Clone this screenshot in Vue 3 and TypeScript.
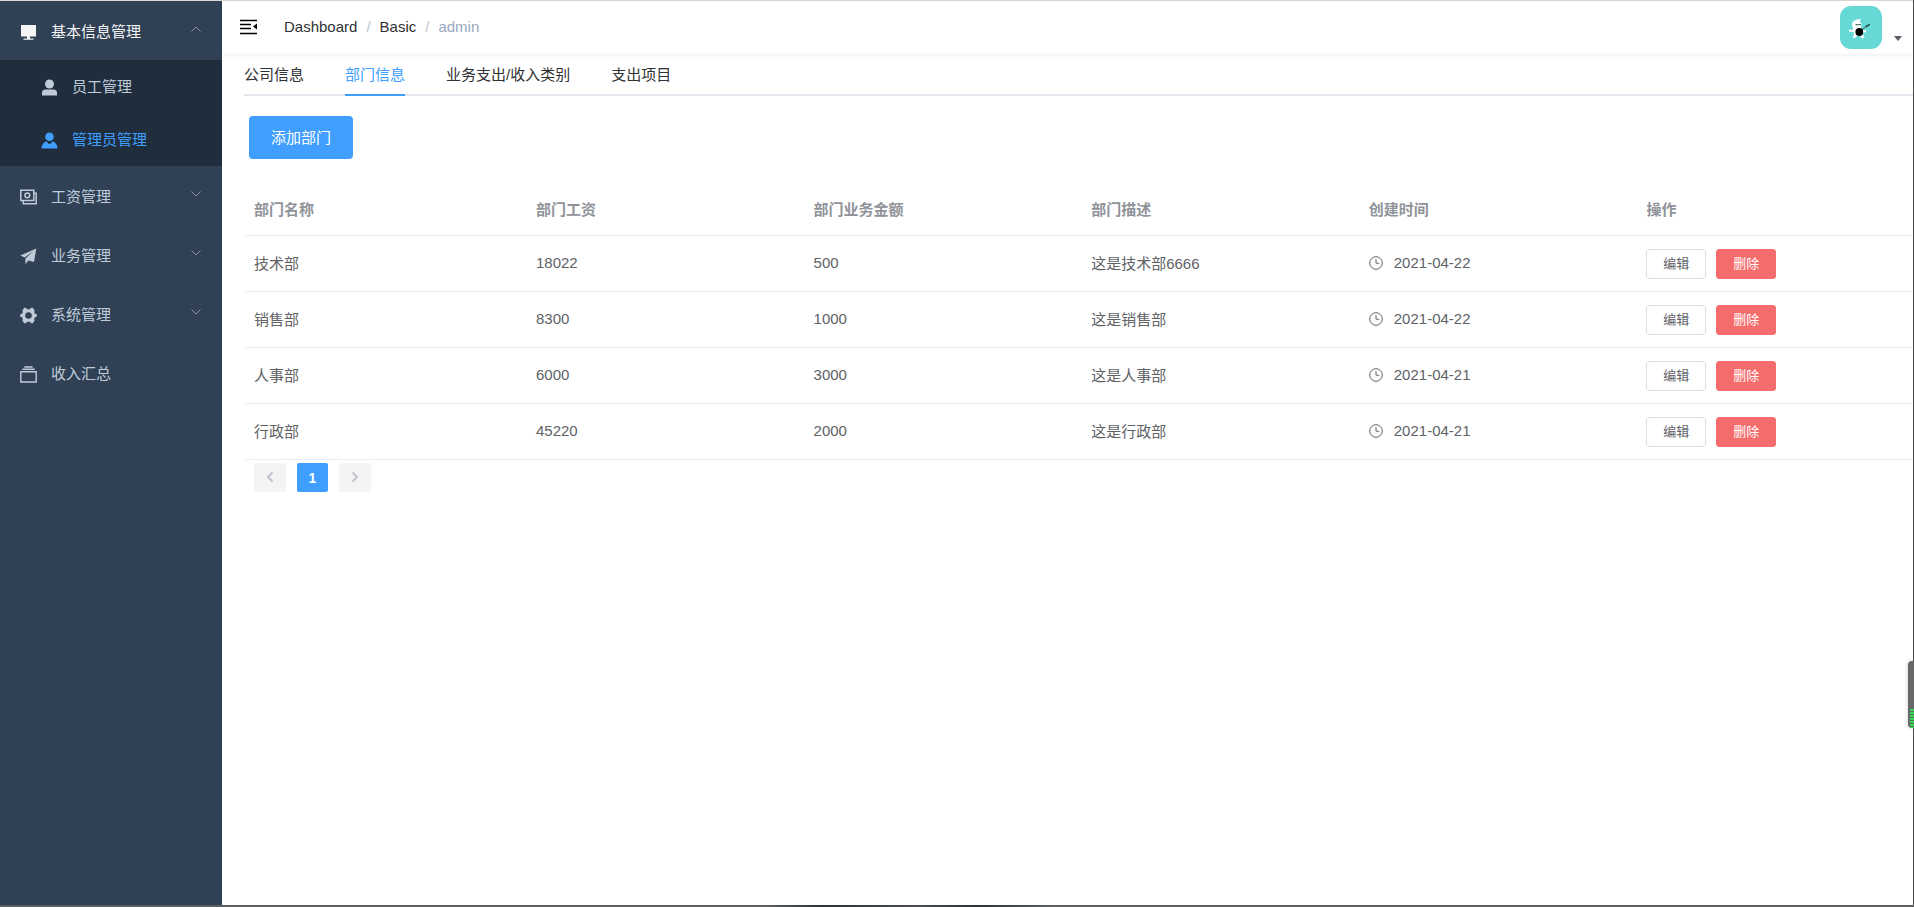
<script setup lang="ts">
import { ref } from 'vue'

interface Department {
  name: string
  salary: number
  amount: number
  description: string
  created: string
}

interface MenuEntry {
  title: string
  icon: 'money' | 'plane' | 'gear' | 'wallet'
  expandable: boolean
}

const menu: MenuEntry[] = [
  { title: '工资管理', icon: 'money', expandable: true },
  { title: '业务管理', icon: 'plane', expandable: true },
  { title: '系统管理', icon: 'gear', expandable: true },
  { title: '收入汇总', icon: 'wallet', expandable: false },
]

const tabs: string[] = ['公司信息', '部门信息', '业务支出/收入类别', '支出项目']
const activeTab = ref('部门信息')

const columns: string[] = ['部门名称', '部门工资', '部门业务金额', '部门描述', '创建时间', '操作']
const departments: Department[] = [
  { name: '技术部', salary: 18022, amount: 500, description: '这是技术部6666', created: '2021-04-22' },
  { name: '销售部', salary: 8300, amount: 1000, description: '这是销售部', created: '2021-04-22' },
  { name: '人事部', salary: 6000, amount: 3000, description: '这是人事部', created: '2021-04-21' },
  { name: '行政部', salary: 45220, amount: 2000, description: '这是行政部', created: '2021-04-21' },
]
</script>

<template>
  <div class="app">
    <nav class="sidebar" aria-label="主菜单">
      <button type="button" class="item open" aria-expanded="true">
        <svg class="icon" viewBox="0 0 17 17" fill="currentColor"><path d="M1 1h15v11.500H1zM7 12.500h3v2.200h-3zM3.500 14.500h10v1.200h-10z" /></svg>
        <span class="label">基本信息管理</span>
        <svg class="chevron" viewBox="0 0 10 6"><path d="M.5 5.500 5 1l4.500 4.500" /></svg>
      </button>
      <div class="submenu">
        <a href="#staff" class="subitem">
          <svg class="icon" viewBox="0 0 17 17" fill="currentColor"><circle cx="8.500" cy="5" r="4.500" /><path d="M1 16.500v-2.500q0-3.500 3.500-3.500h8q3.500 0 3.500 3.500v2.500z" /></svg>
          <span>员工管理</span>
        </a>
        <a href="#admins" class="subitem active">
          <svg class="icon" viewBox="0 0 17 17" fill="currentColor"><circle cx="8.500" cy="4.800" r="4.300" /><path d="M.5 16.500q0-5 4.800-7.300l2.200 2.600h2l2.200-2.600q4.800 2.300 4.800 7.300z" /></svg>
          <span>管理员管理</span>
        </a>
      </div>
      <button v-for="entry in menu" :key="entry.title" type="button" class="item">
        <svg v-if="entry.icon === 'money'" class="icon" viewBox="0 0 17 17" fill="none" stroke="currentColor" stroke-width="1.500">
          <path d="M.8 1.200h13v10.300H.8zM13.800 4.200h2.400v10.600H3.300v-3.300" /><circle cx="7.300" cy="6.300" r="2.400" />
        </svg>
        <svg v-else-if="entry.icon === 'plane'" class="icon" viewBox="0 0 17 17" fill="currentColor">
          <path d="M16.300.6.3 7.400l4.300 2L13.500 3 5.400 10.400v5.800l2.900-3.800 5.700 1.700z" />
        </svg>
        <svg v-else-if="entry.icon === 'gear'" class="icon" viewBox="0 0 17 17" fill="currentColor">
          <path fill-rule="evenodd" d="M4.200.8h1.800l1 1.400h3l1-1.400h1.800l1.800 2.600-.4 1.800.8 1.500 1.800.6v2.400l-1.800.6-.8 1.500.4 1.800-1.800 2.600h-1.800l-1-1.400h-3l-1 1.400H4.200l-1.800-2.600.4-1.800-.8-1.500-1.800-.6V7.300L2 6.700l.8-1.500-.4-1.800zM8.500 5.200a3.300 3.300 0 1 0 0 6.600 3.300 3.300 0 0 0 0-6.600z" />
        </svg>
        <svg v-else class="icon" viewBox="0 0 17 17" fill="none" stroke="currentColor" stroke-width="1.400">
          <path d="M.8 5.700h15.400v10.300H.8zM2.300 3.300h12.400M4.300 1h8.400" />
        </svg>
        <span class="label">{{ entry.title }}</span>
        <svg v-if="entry.expandable" class="chevron" viewBox="0 0 10 6"><path d="M.5.5 5 5 9.500.5" /></svg>
      </button>
    </nav>

    <div class="page">
      <header class="topbar">
        <button type="button" class="fold" aria-label="收起菜单">
          <svg viewBox="0 0 17 16" width="17" height="16"><path d="M0 1.500h17M0 5.500h11M0 9.500h11M0 14.500h17" fill="none" stroke="#000" stroke-width="1.300" /><path d="M17 4.500v6l-4-3z" /></svg>
        </button>
        <nav class="breadcrumb" aria-label="面包屑">
          <a href="#dashboard">Dashboard</a><span class="slash">/</span>
          <a href="#basic">Basic</a><span class="slash">/</span>
          <span class="current">admin</span>
        </nav>
        <button type="button" class="account" aria-label="用户菜单">
          <svg class="avatar" viewBox="0 0 42 43">
            <rect width="42" height="43" fill="#66d9d6" />
            <path d="M12 17.500q1.500-4.500 9-4.500l-1.500 2.500 2 1.500-.5 5 3 2.500 2-.5v2l-3 1 .5 3 1 2-2.500.5-2-3-3 .5-2 2-2.500-.5 1.500-3-.5-2.500-4.500-.5v-2l4 .5z" fill="#fff" />
            <path d="M15.500 18.700h5.500M20.500 25l6-5" fill="none" stroke="#2b5a5a" stroke-width="1" />
            <path d="M25.500 19.800 30 17.500l-.5 2-3.500 2z" fill="#24484a" />
            <circle cx="19.300" cy="26" r="3.900" fill="#000" />
          </svg>
          <svg class="caret" viewBox="0 0 8 5"><path d="M0 0h8L4 5z" fill="#5a5e66" /></svg>
        </button>
      </header>

      <main class="content">
        <div class="tabs" role="tablist">
          <button
            v-for="tab in tabs"
            :key="tab"
            type="button"
            role="tab"
            :aria-selected="tab === activeTab"
            :class="['tab', { active: tab === activeTab }]"
            @click="activeTab = tab"
          >{{ tab }}</button>
        </div>

        <button type="button" class="add">添加部门</button>

        <table class="table">
          <thead>
            <tr><th v-for="column in columns" :key="column" scope="col">{{ column }}</th></tr>
          </thead>
          <tbody>
            <tr v-for="row in departments" :key="row.name">
              <td>{{ row.name }}</td>
              <td>{{ row.salary }}</td>
              <td>{{ row.amount }}</td>
              <td>{{ row.description }}</td>
              <td>
                <div class="date">
                  <svg viewBox="0 0 14 14" width="14" height="14" fill="none" stroke="currentColor"><circle cx="7" cy="7" r="6.300" /><path d="M7 3.200v4h3.300" /></svg>
                  <span>{{ row.created }}</span>
                </div>
              </td>
              <td class="operations">
                <div class="actions">
                  <button type="button" class="small">编辑</button>
                  <button type="button" class="small danger">删除</button>
                </div>
              </td>
            </tr>
          </tbody>
        </table>

        <nav class="pagination" aria-label="分页">
          <button type="button" class="pager" disabled aria-label="上一页"><svg viewBox="0 0 8 12"><path d="M6.500 1.500 2 6l4.500 4.500" /></svg></button>
          <button type="button" class="pager current" aria-current="page">1</button>
          <button type="button" class="pager" disabled aria-label="下一页"><svg viewBox="0 0 8 12"><path d="M1.500 1.500 6 6l-4.500 4.500" /></svg></button>
        </nav>
      </main>
    </div>

    <div class="edge-right"></div>
    <div class="edge-bottom"></div>
    <div class="meter"><i></i></div>
  </div>
</template>

<style>
body {
  margin: 0;
}
</style>

<style scoped>
.app {
  display: flex;
  box-sizing: border-box;
  min-height: 100vh;
  border-top: 1px solid #d9d9d9;
  background: #fff;
  color: #606266;
  font-family: 'Liberation Sans', 'Noto Sans CJK SC', sans-serif;
  font-size: 15px;
}

button {
  margin: 0;
  padding: 0;
  border: 0;
  background: none;
  color: inherit;
  font: inherit;
  cursor: pointer;
}

a {
  color: inherit;
  text-decoration: none;
}

.sidebar {
  display: flex;
  flex: none;
  flex-direction: column;
  width: 222px;
  background: #304156;
  color: #bfcbd9;
}

.item {
  display: flex;
  align-items: center;
  box-sizing: border-box;
  height: 59px;
  padding: 0 21px 1px 20px;
  text-align: left;
}

.item.open {
  color: #f4f4f5;
}

.icon {
  flex: none;
  width: 17px;
  height: 17px;
  margin-top: 4px;
}

.label {
  flex: 1;
  margin-left: 14px;
}

.chevron {
  width: 10px;
  height: 6px;
  margin-bottom: 2px;
  fill: none;
  stroke: #909399;
}

.submenu {
  background: #1f2d3d;
}

.subitem {
  display: flex;
  align-items: center;
  gap: 14px;
  box-sizing: border-box;
  height: 53px;
  padding: 0 0 2px 41px;
}

.subitem.active {
  color: #409eff;
}

.page {
  flex: 1;
  min-width: 0;
}

.topbar {
  display: flex;
  align-items: center;
  height: 53px;
  padding: 0 12px 0 18px;
  box-shadow: 0 1px 4px rgba(0, 21, 41, 0.08);
}

.fold {
  display: flex;
  padding-bottom: 2px;
}

.breadcrumb {
  display: flex;
  flex: 1;
  margin-left: 27px;
  padding-bottom: 2px;
  color: #303133;
}

.slash {
  margin: 0 9px;
  color: #c0c4cc;
}

.current {
  color: #97a8be;
}

.account {
  display: flex;
  align-items: flex-end;
  gap: 12px;
}

.avatar {
  width: 42px;
  height: 43px;
  border-radius: 11px;
}

.caret {
  width: 8px;
  height: 5px;
  margin-bottom: 8px;
}

.content {
  padding-left: 22px;
}

.tabs {
  display: flex;
  gap: 41px;
  box-shadow: inset 0 -2px #e4e7ed;
}

.tab {
  box-sizing: border-box;
  height: 42px;
  padding-bottom: 2px;
  border-bottom: 2px solid transparent;
  color: #303133;
}

.tab.active {
  border-color: #409eff;
  color: #409eff;
}

.add {
  display: block;
  width: 104px;
  height: 43px;
  margin: 20px 0 24px 5px;
  padding-bottom: 2px;
  border-radius: 4px;
  background: #409eff;
  color: #fff;
}

.table {
  width: 100%;
  border-collapse: separate;
  border-spacing: 0;
  table-layout: fixed;
}

.table th,
.table td {
  box-sizing: border-box;
  height: 56px;
  padding: 0 10px 2px;
  border-bottom: 1px solid #ebeef5;
  text-align: left;
}

.table th {
  height: 53px;
  color: #909399;
  font-weight: 700;
}

.table th:first-child {
  width: 282px;
}

.table .operations {
  padding-bottom: 0;
}

.date {
  display: flex;
  align-items: center;
  gap: 11px;
}

.actions {
  display: flex;
  gap: 10px;
}

.small {
  box-sizing: border-box;
  width: 60px;
  height: 30px;
  padding-bottom: 2px;
  border: 1px solid #dcdfe6;
  border-radius: 3px;
  background: #fff;
  font-size: 13px;
}

.small.danger {
  border-color: #f56c6c;
  background: #f56c6c;
  color: #fff;
}

.pagination {
  display: flex;
  gap: 11px;
  padding: 3px 10px;
}

.pager {
  display: flex;
  align-items: center;
  justify-content: center;
  box-sizing: border-box;
  width: 32px;
  height: 29px;
  padding-bottom: 2px;
  border-radius: 2px;
  background: #f4f4f5;
  font-size: 14px;
}

.pager.current {
  width: 31px;
  padding-bottom: 0;
  background: #409eff;
  color: #fff;
  font-weight: 700;
}

.pager svg {
  width: 8px;
  height: 12px;
  fill: none;
  stroke: #c0c4cc;
  stroke-width: 2;
}

.edge-right {
  position: fixed;
  top: 0;
  right: 0;
  bottom: 0;
  width: 1px;
  background: #4a4a4c;
}

.edge-bottom {
  position: fixed;
  right: 0;
  bottom: 0;
  left: 0;
  height: 2px;
  background: linear-gradient(90deg, #5c5e60 40%, #2e3134 43%, #4a4c50 48%, #2e3134 51%, #5c5e60 55%);
}

.meter {
  position: fixed;
  right: 0;
  bottom: 179px;
  display: flex;
  align-items: flex-end;
  justify-content: flex-end;
  width: 6px;
  height: 67px;
  border-radius: 4px 0 0 4px;
  background: #666869;
  box-shadow: 0 0 4px rgba(0, 0, 0, 0.2);
}

.meter i {
  width: 4px;
  height: 19px;
  background: repeating-linear-gradient(#36d657 0 2px, #59705e 2px 3px);
}
</style>
